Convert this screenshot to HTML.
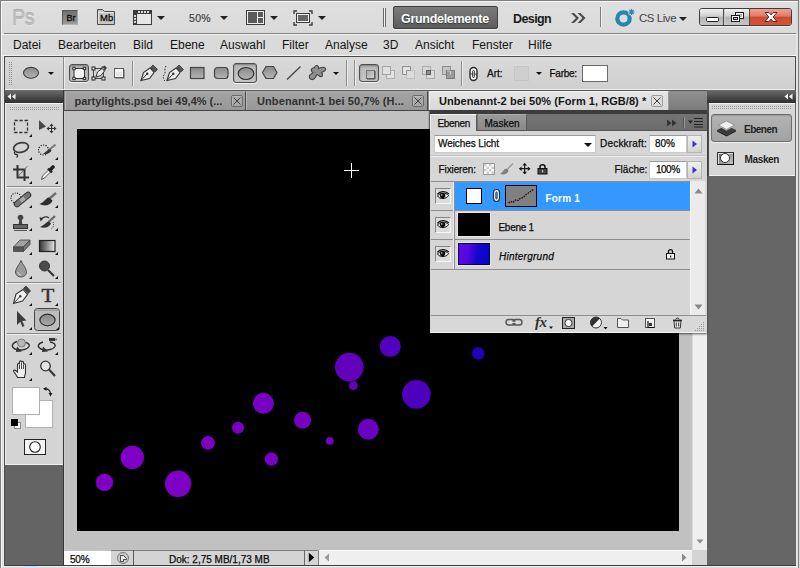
<!DOCTYPE html>
<html lang="de"><head><meta charset="utf-8"><title>Photoshop</title>
<style>
*{box-sizing:border-box;margin:0;padding:0}
html,body{width:800px;height:568px;overflow:hidden;background:#d8d8d8;font-family:"Liberation Sans",sans-serif;font-size:11px;color:#111}
.a{position:absolute}
#frame{position:absolute;left:0;top:0;width:799px;height:568px;border-left:1px solid #808080;border-top:1px solid #808080;border-right:1px solid #808080;background:#d9d9d9}
#frame:before{content:"";position:absolute;left:0;top:0;right:0;bottom:0;border-left:1px solid #f6f6f6;border-top:1px solid #f6f6f6}
#appbar{left:2px;top:2px;width:794px;height:31px;background:linear-gradient(#dfdfdf,#dadada)}
#appline{left:4px;top:33px;width:792px;height:1px;background:#828282}
#menubar{left:2px;top:34px;width:794px;height:22px;background:#dadada;border-top:1px solid #f0f0f0;border-bottom:1px solid #f2f2f2}
.mi{position:absolute;top:38px;font-size:12px;color:#141414;white-space:nowrap}
#optbar{left:4px;top:56px;width:792px;height:34px;background:linear-gradient(#dadada,#cfcfcf);border-top:1px solid #4c4c4c;border-left:1px solid #707070;border-bottom:1px solid #efefef}
.vsep{position:absolute;width:1px;background:#8c8c8c;box-shadow:1px 0 0 #ececec}
#tabbar{left:64px;top:90px;width:643px;height:21px;background:linear-gradient(#909090,#7c7c7c);border-bottom:1px solid #444;border-top:1px solid #555}
.tab{position:absolute;top:91px;height:19px;background:linear-gradient(#a4a4a4,#989898);border-left:1px solid #b4b4b4;border-top:1px solid #b0b0b0;border-right:1px solid #4c4c4c;font-weight:bold;font-size:11px;color:#303030;white-space:nowrap;padding:3px 0 0 9px}
.tab.act{background:linear-gradient(#e6e6e6,#d8d8d8);color:#161616;height:19px;border-left-color:#f0f0f0;border-top-color:#f2f2f2;border-right-color:#9a9a9a}
.cb{position:absolute;top:3px;width:12px;height:12px;border-radius:2px;border:1px solid #6a6a6a;background:rgba(255,255,255,.12);box-shadow:inset 1px 1px 0 rgba(255,255,255,.18)}
.cb svg{position:absolute;left:0;top:0}
#tbhead{left:5px;top:90px;width:58px;height:13px;background:linear-gradient(#6c6c6c,#2f2f2f)}
#toolbox{left:5px;top:103px;width:58px;height:362px;background:#d4d4d4;border-top:1px solid #f2f2f2}
#tbdark{left:5px;top:465px;width:58px;height:100px;background:#646464}
#docbg{left:64px;top:111px;width:628px;height:439px;background:#c1c1c1;border-left:1px solid #cacaca}
#canvas{left:77px;top:129px;width:602px;height:402px;background:#000;overflow:hidden}
.dot{position:absolute;border-radius:50%}
.tri{width:0;height:0;border-left:4px solid transparent;border-right:4px solid transparent;border-top:4px solid #222}

.tri.s{border-left-width:3px;border-right-width:3px;border-top-width:3px;border-top-color:#111}
.selbtn{position:absolute;background:linear-gradient(#b9b9b9,#c6c6c6);border:1px solid #4f4f4f;border-radius:3px;box-shadow:inset 0 1px 2px rgba(0,0,0,.35),0 1px 0 #f2f2f2}

.eye{position:absolute;left:435px;width:16px;height:16px;background:#dcdcdc;border:1px solid #858585;border-right-color:#f8f8f8;border-bottom-color:#f8f8f8}
.t10{font-size:10px;line-height:12px;color:#0c0c0c;-webkit-text-stroke:0.25px #0c0c0c;white-space:nowrap}
.t10.b{font-weight:bold;-webkit-text-stroke:0;color:#1e1e1e}
</style></head><body>
<div id="frame"></div>
<div id="appbar" class="a"></div>
<div id="appline" class="a"></div>
<div id="menubar" class="a"></div>
<!-- APPBAR ITEMS -->
<div class="a" id="pslogo" style="left:12px;top:5px;font-size:22px;line-height:26px;letter-spacing:-0.5px;color:#bebebe;-webkit-text-stroke:0.5px #bcbcbc;text-shadow:0 1px 0 #f0f0f0,0 -1px 0 #acacac;transform:scaleX(0.9);transform-origin:0 0">Ps</div>
<div class="a abtn" style="left:62px;top:10px;width:16px;height:15px;background:linear-gradient(#6f6f6f,#9a9a9a);border:1px solid #5a5a5a;border-bottom-color:#b5b5b5;border-right-color:#a5a5a5"><span style="position:absolute;left:3.500px;top:2px;font-size:9px;line-height:11px;color:#0a0a0a;-webkit-text-stroke:0.3px #0a0a0a">Br</span></div>
<svg class="a" style="left:96px;top:8px" width="20" height="18" viewBox="0 0 20 18"><path d="M1.500 16.500V1.500H6.500L8.500 3.500H18.500V16.500Z" fill="#c6c6c6" stroke="#4a4a4a"/><path d="M2.500 15.500V4.500H17.500" fill="none" stroke="#e6e6e6"/></svg>
<div class="a" style="left:100px;top:12px;font-size:9.500px;line-height:11px;color:#0a0a0a;-webkit-text-stroke:0.3px #0a0a0a">Mb</div>
<svg class="a" style="left:133px;top:10px" width="19" height="15" viewBox="0 0 19 15"><rect x="0" y="0" width="19" height="15" fill="#3c3c3c"/><rect x="4" y="4" width="14" height="10" fill="#e6e6e6"/><g fill="#d8d8d8"><rect x="5" y="1" width="2" height="2"/><rect x="8" y="1" width="2" height="2"/><rect x="11" y="1" width="2" height="2"/><rect x="14" y="1" width="2" height="2"/><rect x="1" y="5" width="2" height="2"/><rect x="1" y="8" width="2" height="2"/><rect x="1" y="11" width="2" height="2"/></g></svg>
<div class="a tri" style="left:157px;top:16px"></div>
<div class="a" style="left:189px;top:11.500px;font-size:10.500px;line-height:13px;letter-spacing:0.3px;color:#444;-webkit-text-stroke:0.2px #444">50%</div>
<div class="a tri" style="left:220px;top:16px"></div>
<svg class="a" style="left:246px;top:10px" width="19" height="15" viewBox="0 0 19 15"><rect x="0.500" y="0.500" width="18" height="14" fill="#efefef" stroke="#3c3c3c"/><rect x="2" y="2" width="9" height="11" fill="#5a5a5a"/><rect x="12" y="2" width="5" height="5" fill="#5a5a5a"/><rect x="12" y="8" width="5" height="5" fill="#5a5a5a"/></svg>
<div class="a tri" style="left:270px;top:16px"></div>
<svg class="a" style="left:293px;top:10px" width="20" height="16" viewBox="0 0 20 16"><path d="M1 4V1H4M16 1H19V4M19 12V15H16M4 15H1V12" fill="none" stroke="#3c3c3c" stroke-width="1.400"/><rect x="3.500" y="3.500" width="13" height="9" fill="#f0f0f0" stroke="#3c3c3c"/><rect x="5" y="5" width="10" height="6" fill="#666"/></svg>
<div class="a tri" style="left:318px;top:16px"></div>
<div class="a" style="left:383px;top:8px;width:1px;height:19px;background:#6a6a6a;box-shadow:2px 0 0 #6a6a6a,1px 0 0 #f4f4f4"></div>
<div class="a" style="left:393px;top:6px;width:105px;height:23px;background:linear-gradient(#7c7c7c,#5c5c5c);border:1px solid #3f3f3f;border-radius:2px;box-shadow:0 1px 0 #f0f0f0"><span style="position:absolute;left:7px;top:4.500px;font-size:12.500px;letter-spacing:-0.3px;font-weight:bold;color:#fff;text-shadow:0 1px 1px #333;white-space:nowrap">Grundelemente</span></div>
<div class="a" style="left:513px;top:11.500px;font-size:12.500px;letter-spacing:-0.6px;font-weight:bold;color:#1a1a1a">Design</div>
<svg class="a" style="left:570px;top:12px" width="16" height="12" viewBox="0 0 16 12"><path d="M1 1H4L9 6L4 11H1L6 6Z M7.500 1H10.500L15.500 6L10.500 11H7.500L12.500 6Z" fill="#4a4a4a"/></svg>
<div class="a" style="left:600px;top:7px;width:1px;height:20px;background:#7d7d7d;box-shadow:1px 0 0 #f0f0f0"></div>
<svg class="a" style="left:613px;top:8px" width="24" height="20" viewBox="0 0 24 20"><circle cx="10.500" cy="10.500" r="6.200" fill="none" stroke="#2187ac" stroke-width="4.200"/><circle cx="18.500" cy="4" r="3.400" fill="#d9d9d9"/><path d="M18.500 1V7M15.500 4H21.500M16.400 1.900L20.600 6.100M20.600 1.900L16.400 6.100" stroke="#2187ac" stroke-width="1.100"/></svg>
<div class="a" style="left:639px;top:11px;font-size:11.500px;line-height:14px;letter-spacing:-0.45px;color:#444;white-space:nowrap">CS Live</div>
<div class="a tri" style="left:679px;top:17px"></div>
<!-- window buttons -->
<div class="a" style="left:699px;top:8px;width:93px;height:18px;border:1px solid #3c3c3c;border-radius:3px;overflow:hidden;box-shadow:0 1px 0 #f2f2f2;background:#ccc">
 <div style="position:absolute;left:0;top:0;width:24px;height:16px;background:linear-gradient(#f2f2f2,#d0d0d0 45%,#b4b4b4 50%,#c6c6c6);border-right:1px solid #4a4a4a"></div>
 <div style="position:absolute;left:25px;top:0;width:25px;height:16px;background:linear-gradient(#f2f2f2,#d0d0d0 45%,#b4b4b4 50%,#c6c6c6);border-right:1px solid #4a4a4a"></div>
 <div style="position:absolute;left:50px;top:0;width:42px;height:16px;background:linear-gradient(#eda293,#e07a66 45%,#cf4a2f 50%,#d4553a)"></div>
 <svg style="position:absolute;left:0;top:0" width="92" height="16" viewBox="0 0 92 16"><rect x="6.500" y="8.500" width="12" height="4" rx="1" fill="#fff" stroke="#1c1c1c"/><rect x="35.500" y="3.500" width="8" height="6" fill="#fff" stroke="#1c1c1c"/><rect x="37" y="5" width="5" height="3" fill="#bbb"/><rect x="31.500" y="6.500" width="8" height="6" fill="#fff" stroke="#1c1c1c"/><rect x="33.500" y="8.500" width="4" height="2" fill="#ccc" stroke="#1c1c1c"/><path d="M65 3.500H69L71 6L73 3.500H77L73.200 8L77 12.500H73L71 10L69 12.500H65L68.800 8Z" fill="#fff" stroke="#5a2a22" stroke-width="1"/></svg>
</div>
<!-- MENU -->
<div class="mi" style="left:13px">Datei</div><div class="mi" style="left:58px">Bearbeiten</div><div class="mi" style="left:133px">Bild</div><div class="mi" style="left:170px">Ebene</div><div class="mi" style="left:220px">Auswahl</div><div class="mi" style="left:282px">Filter</div><div class="mi" style="left:325px">Analyse</div><div class="mi" style="left:383px">3D</div><div class="mi" style="left:415px">Ansicht</div><div class="mi" style="left:472px">Fenster</div><div class="mi" style="left:528px">Hilfe</div>
<div id="optbar" class="a"></div>

<!-- options bar items -->
<svg class="a" style="left:8px;top:60px" width="6" height="28" viewBox="0 0 6 28"><g fill="#8e8e8e"><rect x="1" y="2" width="1" height="1"/><rect x="3" y="2" width="1" height="1"/><rect x="1" y="4" width="1" height="1"/><rect x="3" y="4" width="1" height="1"/><rect x="1" y="6" width="1" height="1"/><rect x="3" y="6" width="1" height="1"/><rect x="1" y="8" width="1" height="1"/><rect x="3" y="8" width="1" height="1"/><rect x="1" y="10" width="1" height="1"/><rect x="3" y="10" width="1" height="1"/><rect x="1" y="12" width="1" height="1"/><rect x="3" y="12" width="1" height="1"/><rect x="1" y="14" width="1" height="1"/><rect x="3" y="14" width="1" height="1"/><rect x="1" y="16" width="1" height="1"/><rect x="3" y="16" width="1" height="1"/><rect x="1" y="18" width="1" height="1"/><rect x="3" y="18" width="1" height="1"/><rect x="1" y="20" width="1" height="1"/><rect x="3" y="20" width="1" height="1"/><rect x="1" y="22" width="1" height="1"/><rect x="3" y="22" width="1" height="1"/><rect x="1" y="24" width="1" height="1"/><rect x="3" y="24" width="1" height="1"/></g></svg>
<svg class="a" style="left:22px;top:65px" width="19" height="16" viewBox="0 0 19 16"><defs><linearGradient id="eg" x1="0" y1="0" x2="0" y2="1"><stop offset="0" stop-color="#8a8a8a"/><stop offset="1" stop-color="#b4b4b4"/></linearGradient></defs><ellipse cx="9" cy="7.800" rx="7.500" ry="5.400" fill="url(#eg)" stroke="#3c3c3c" stroke-width="1.100"/></svg>
<div class="a tri s" style="left:48px;top:72px"></div>
<div class="vsep" style="left:63px;top:57px;height:32px"></div>
<div class="a selbtn" style="left:69px;top:64px;width:20px;height:18px"></div>
<svg class="a" style="left:71px;top:65px" width="16" height="16" viewBox="0 0 16 16"><rect x="3" y="3.500" width="10.500" height="10" fill="#f4f4f4" stroke="#333"/><g fill="#f4f4f4" stroke="#222" stroke-width="0.900"><rect x="1.800" y="2.300" width="2.400" height="2.400"/><rect x="12.300" y="2.300" width="2.400" height="2.400"/><rect x="1.800" y="12.300" width="2.400" height="2.400"/><rect x="12.300" y="12.300" width="2.400" height="2.400"/></g></svg>
<svg class="a" style="left:91px;top:64px" width="17" height="18" viewBox="0 0 17 18"><rect x="2.500" y="4.500" width="10" height="10" fill="none" stroke="#444"/><g fill="#eee" stroke="#222"><rect x="1" y="3" width="3" height="3"/><rect x="11" y="3" width="3" height="3"/><rect x="1" y="13" width="3" height="3"/><rect x="11" y="13" width="3" height="3"/></g><path d="M5 13L6.500 8L11 4.500L13.500 7L10 11.500Z" fill="#e8e8e8" stroke="#333"/><path d="M11.500 3.500L13.500 1.500L16 4L14 6Z" fill="#444"/></svg>
<svg class="a" style="left:113px;top:67px" width="13" height="13" viewBox="0 0 13 13"><rect x="1.500" y="1.500" width="9" height="9" fill="#f4f4f4" stroke="#5a5a5a"/><path d="M2.500 11.500H11.500V2.500" fill="none" stroke="#9a9a9a"/><rect x="3" y="5" width="6" height="4" fill="#e6e6e6"/></svg>
<div class="vsep" style="left:132px;top:61px;height:25px"></div>
<svg class="a" style="left:139px;top:64px" width="20" height="18" viewBox="0 0 20 18"><path d="M2 16.500L4.500 8.500L11 4L15 8.500L10.500 14.500Z" fill="#eee" stroke="#333" stroke-width="1.100"/><path d="M2 16.500L8 10" stroke="#333"/><circle cx="8.300" cy="9.700" r="1.200" fill="#333"/><path d="M11.500 3.500L14 1L18.500 5.500L16 8Z" fill="#555" stroke="#333" stroke-width="0.800"/></svg>
<svg class="a" style="left:162px;top:64px" width="23" height="18" viewBox="0 0 23 18"><path d="M4 2C1.500 5 4.500 8 2 11S3 15 2.500 17" fill="none" stroke="#333" stroke-dasharray="1.500 1.500"/><path d="M5 16.500L7.500 8.500L14 4L18 8.500L13.500 14.500Z" fill="#eee" stroke="#333" stroke-width="1.100"/><path d="M5 16.500L11 10" stroke="#333"/><circle cx="11.300" cy="9.700" r="1.200" fill="#333"/><path d="M14.500 3.500L17 1L21.500 5.500L19 8Z" fill="#555" stroke="#333" stroke-width="0.800"/></svg>
<svg class="a" style="left:189px;top:66px" width="17" height="14" viewBox="0 0 17 14"><rect x="1.500" y="1.500" width="13.500" height="11" fill="url(#eg)" stroke="#444" stroke-width="1.200"/></svg>
<svg class="a" style="left:213px;top:66px" width="17" height="14" viewBox="0 0 17 14"><rect x="1.500" y="1.500" width="13.500" height="11" rx="3" fill="url(#eg)" stroke="#444" stroke-width="1.200"/></svg>
<div class="a selbtn" style="left:233px;top:63px;width:24px;height:20px"></div>
<svg class="a" style="left:237px;top:66px" width="19" height="15" viewBox="0 0 19 15"><ellipse cx="9" cy="7.500" rx="7.800" ry="6" fill="url(#eg)" stroke="#333" stroke-width="1.200"/></svg>
<svg class="a" style="left:261px;top:65px" width="18" height="15" viewBox="0 0 18 15"><path d="M1.500 7.500L5 1.500H12.500L16 7.500L12.500 13.500H5Z" fill="url(#eg)" stroke="#444" stroke-width="1.200"/></svg>
<svg class="a" style="left:286px;top:65px" width="16" height="16" viewBox="0 0 16 16"><path d="M1 14.500L14.500 1.500" stroke="#444" stroke-width="1.300"/></svg>
<svg class="a" style="left:307px;top:64px" width="21" height="18" viewBox="0 0 21 18"><path d="M8 2.500C9.500 0.500 12 2 11.500 4.500C13.500 3.500 17 2.500 18.500 4.500C19.500 6.500 16.500 7.500 14.500 8.500C16.500 10.500 15.500 13 13 12.500C12 12 11 10.500 10 10.500C9 11.500 8.500 15 6 15.500C3.500 16 1.500 14 2.500 11.500C3.500 10 6 9.500 6 8.500C4.500 8 3.500 6 5 4.500C6 3.500 7.500 4.500 8 2.500Z" fill="#8f8f8f" stroke="#444" stroke-width="1.100"/></svg>
<div class="a tri s" style="left:333px;top:72px"></div>
<div class="vsep" style="left:346px;top:60px;height:26px"></div>
<div class="vsep" style="left:354px;top:60px;height:26px"></div>
<div class="a selbtn" style="left:359px;top:64px;width:20px;height:18px"></div>
<svg class="a" style="left:363px;top:67px" width="14" height="13" viewBox="0 0 14 13"><defs><linearGradient id="sq" x1="0" y1="0" x2="1" y2="1"><stop offset="0" stop-color="#a4a4a4"/><stop offset="1" stop-color="#d4d4d4"/></linearGradient></defs><rect x="3.500" y="3.500" width="8" height="8" fill="url(#sq)" stroke="#777"/><path d="M4 12H12V4" fill="none" stroke="#4a4a4a"/></svg>
<svg class="a" style="left:382px;top:66px" width="14" height="14" viewBox="0 0 14 14"><rect x="4.500" y="4.500" width="8" height="8" fill="#e2e2e2" stroke="#b0b0b0"/><rect x="0.500" y="0.500" width="8" height="8" fill="#e0e0e0" stroke="#a4a4a4"/></svg>
<svg class="a" style="left:402px;top:66px" width="14" height="14" viewBox="0 0 14 14"><rect x="4.500" y="4.500" width="8" height="8" fill="#dcdcdc" stroke="#c0c0c0"/><path d="M0.500 8.500V0.500H8.500V4.500H4.500V8.500Z" fill="#e4e4e4" stroke="#8e8e8e"/></svg>
<svg class="a" style="left:422px;top:66px" width="14" height="14" viewBox="0 0 14 14"><rect x="4.500" y="4.500" width="8" height="8" fill="#dcdcdc" stroke="#aaa"/><rect x="0.500" y="0.500" width="8" height="8" fill="none" stroke="#aaa"/><rect x="4.500" y="4.500" width="4" height="4" fill="#8e8e8e" stroke="#5e5e5e"/></svg>
<svg class="a" style="left:442px;top:66px" width="14" height="14" viewBox="0 0 14 14"><rect x="0.500" y="0.500" width="8" height="8" fill="#c4c4c4" stroke="#8e8e8e"/><rect x="4.500" y="4.500" width="8" height="8" fill="#9a9a9a" stroke="#7a7a7a"/><path d="M5 5H8.500V8.500" fill="none" stroke="#ddd" stroke-width="0.800"/></svg>
<div class="vsep" style="left:461px;top:61px;height:25px"></div>
<svg class="a" style="left:468px;top:66px" width="12" height="16" viewBox="0 0 12 16"><rect x="2" y="1.500" width="7" height="13" rx="3.500" fill="#f6f6f6" stroke="#2a2a2a" stroke-width="1.400"/><rect x="4.600" y="4.500" width="1.800" height="7" rx="0.900" fill="#d8d8d8" stroke="#2a2a2a" stroke-width="0.900"/><path d="M2 8H4.500M6.500 8H9" stroke="#2a2a2a" stroke-width="0.800"/></svg>
<div class="a t10" style="left:487px;top:68px">Art:</div>
<div class="a" style="left:514px;top:66px;width:15px;height:15px;background:#cfcfcf;border:1px solid #c6c6c6"></div>
<div class="a tri s" style="left:536px;top:72px"></div>
<div class="a t10" style="left:549.500px;top:68px;letter-spacing:-0.25px">Farbe:</div>
<div class="a" style="left:582px;top:65px;width:26px;height:17px;background:#fff;border:1px solid #6a6a6a"></div>

<div id="tbhead" class="a"></div>
<div id="toolbox" class="a"></div>
<div id="tbdark" class="a"></div><div class="a" style="left:63px;top:90px;width:1px;height:475px;background:#363636"></div>
<svg class="a" style="left:5px;top:103px" width="59" height="362" viewBox="5 103 59 362"><g fill="#9a9a9a"><rect x="10" y="107" width="1" height="1"/><rect x="10" y="109" width="1" height="1"/><rect x="12" y="107" width="1" height="1"/><rect x="12" y="109" width="1" height="1"/><rect x="14" y="107" width="1" height="1"/><rect x="14" y="109" width="1" height="1"/><rect x="16" y="107" width="1" height="1"/><rect x="16" y="109" width="1" height="1"/><rect x="18" y="107" width="1" height="1"/><rect x="18" y="109" width="1" height="1"/><rect x="20" y="107" width="1" height="1"/><rect x="20" y="109" width="1" height="1"/><rect x="22" y="107" width="1" height="1"/><rect x="22" y="109" width="1" height="1"/><rect x="24" y="107" width="1" height="1"/><rect x="24" y="109" width="1" height="1"/><rect x="26" y="107" width="1" height="1"/><rect x="26" y="109" width="1" height="1"/><rect x="28" y="107" width="1" height="1"/><rect x="28" y="109" width="1" height="1"/><rect x="30" y="107" width="1" height="1"/><rect x="30" y="109" width="1" height="1"/><rect x="32" y="107" width="1" height="1"/><rect x="32" y="109" width="1" height="1"/><rect x="34" y="107" width="1" height="1"/><rect x="34" y="109" width="1" height="1"/><rect x="36" y="107" width="1" height="1"/><rect x="36" y="109" width="1" height="1"/><rect x="38" y="107" width="1" height="1"/><rect x="38" y="109" width="1" height="1"/><rect x="40" y="107" width="1" height="1"/><rect x="40" y="109" width="1" height="1"/><rect x="42" y="107" width="1" height="1"/><rect x="42" y="109" width="1" height="1"/><rect x="44" y="107" width="1" height="1"/><rect x="44" y="109" width="1" height="1"/><rect x="46" y="107" width="1" height="1"/><rect x="46" y="109" width="1" height="1"/><rect x="48" y="107" width="1" height="1"/><rect x="48" y="109" width="1" height="1"/><rect x="50" y="107" width="1" height="1"/><rect x="50" y="109" width="1" height="1"/><rect x="52" y="107" width="1" height="1"/><rect x="52" y="109" width="1" height="1"/><rect x="54" y="107" width="1" height="1"/><rect x="54" y="109" width="1" height="1"/><rect x="56" y="107" width="1" height="1"/><rect x="56" y="109" width="1" height="1"/><rect x="58" y="107" width="1" height="1"/><rect x="58" y="109" width="1" height="1"/></g><rect x="7" y="186" width="54" height="1" fill="#8a8a8a"/><rect x="7" y="187" width="54" height="1" fill="#efefef"/><rect x="7" y="282" width="54" height="1" fill="#8a8a8a"/><rect x="7" y="283" width="54" height="1" fill="#efefef"/><rect x="7" y="333" width="54" height="1" fill="#8a8a8a"/><rect x="7" y="334" width="54" height="1" fill="#efefef"/>
<defs><linearGradient id="tg" x1="0" y1="0" x2="1" y2="0"><stop offset="0" stop-color="#333"/><stop offset="1" stop-color="#e8e8e8"/></linearGradient>
<linearGradient id="tg2" x1="0" y1="0" x2="0" y2="1"><stop offset="0" stop-color="#8a8a8a"/><stop offset="1" stop-color="#a8a8a8"/></linearGradient></defs>
<!-- marquee -->
<rect x="14.500" y="120.500" width="13" height="12" fill="none" stroke="#333" stroke-width="1.300" stroke-dasharray="3.200 1.800"/>
<!-- move -->
<path d="M39 120L46 126.500L39 130Z" fill="#4a4a4a"/><path d="M51.500 125V132M48 128.500H55" stroke="#333" stroke-width="1.100"/><path d="M51.500 123.500L53.500 126H49.500ZM51.500 133.500L53.500 131H49.500ZM46.500 128.500L49 126.500V130.500ZM56.500 128.500L54 126.500V130.500Z" fill="#333"/>
<!-- lasso -->
<ellipse cx="21" cy="147.500" rx="7.500" ry="4.800" fill="none" stroke="#3a3a3a" stroke-width="1.700" transform="rotate(-12 21 147.500)"/><path d="M15 151.500C13.500 153 15 154.500 16.500 154.500S18 156.500 16.500 157.500" fill="none" stroke="#3a3a3a" stroke-width="1.300"/>
<!-- quick select -->
<circle cx="43.500" cy="150" r="5" fill="none" stroke="#222" stroke-width="1.200" stroke-dasharray="1.200 1.300"/><path d="M55.500 144.500L49 150" stroke="#777" stroke-width="2"/><path d="M50 149C47 150 45 153 43 153.500C46 155 50 153.500 51.500 150.500Z" fill="#333"/>
<!-- crop -->
<path d="M17.500 165V177.500H29M13 169.500H24.500V181" fill="none" stroke="#333" stroke-width="2"/><path d="M27.500 166L17.500 177" stroke="#555" stroke-width="0.800"/>
<!-- eyedropper -->
<path d="M41.500 179.500L42.500 176L49 169.500L51 171.500L44.500 178Z" fill="#f4f4f4" stroke="#444" stroke-width="0.900"/><path d="M48 168.500L52 172.500" stroke="#222" stroke-width="2.400"/><path d="M50.500 169.500L53 167" stroke="#222" stroke-width="3.600" stroke-linecap="round"/>
<!-- healing -->
<circle cx="16" cy="198" r="5" fill="none" stroke="#222" stroke-width="1.100" stroke-dasharray="1.100 1.300"/><path d="M17 204L28 195" stroke="#333" stroke-width="6.500" stroke-linecap="round"/><path d="M17 204L28 195" stroke="#777" stroke-width="4.500" stroke-linecap="round"/><path d="M20.500 201L24.500 198" stroke="#aaa" stroke-width="3.600"/>
<!-- brush -->
<path d="M56 193L49 199" stroke="#707070" stroke-width="2.400"/><path d="M49 197.500C45.500 198 44 202.500 39.500 204C43.500 206.500 50.500 206 52.500 200.500Z" fill="#2e2e2e"/>
<!-- stamp -->
<circle cx="20.500" cy="217.500" r="2.800" fill="#444"/><path d="M19.300 219H21.700L22.300 225H18.700Z" fill="#444"/><rect x="13.500" y="224.500" width="14" height="4" fill="#666" stroke="#333"/><rect x="14" y="230" width="13" height="1" fill="#555"/>
<!-- history brush -->
<path d="M55 216L48.500 222" stroke="#666" stroke-width="2.200"/><path d="M49 221.500C46 222 44 225.500 40 227C44 228.500 49.500 227.500 51 223.500Z" fill="#333"/><path d="M41 219.500C43 216.500 47 216 49 218" fill="none" stroke="#333" stroke-width="1.200"/><path d="M39.500 217L43.500 218.500L40.500 221.500Z" fill="#333"/><path d="M53 222C54.500 225 53 228.500 50.500 229.500" fill="none" stroke="#444" stroke-dasharray="1 1.200"/>
<!-- eraser -->
<path d="M13.500 247L20 240H30L23.500 247Z" fill="#a0a0a0" stroke="#444" stroke-width="0.800"/><path d="M13.500 247H23.500V251.500H13.500Z" fill="#555" stroke="#444" stroke-width="0.800"/><path d="M23.500 247L30 240V244.500L23.500 251.500Z" fill="#777" stroke="#444" stroke-width="0.800"/>
<!-- gradient -->
<rect x="39.500" y="240.500" width="15.500" height="11" fill="url(#tg)" stroke="#222" stroke-width="1.200"/>
<!-- blur drop -->
<path d="M21 260.500C22 264 26.500 268 26.500 272C26.500 275 24 277 21 277S15.500 275 15.500 272C15.500 268 20 264 21 260.500Z" fill="#9a9a9a" stroke="#555" stroke-width="1"/><path d="M18 272C18 274 19.500 275 21 275" fill="none" stroke="#ddd" stroke-width="1"/>
<!-- dodge -->
<circle cx="44.500" cy="266" r="5" fill="#4a4a4a" stroke="#333"/><path d="M48 270L54 276" stroke="#333" stroke-width="2"/>
<!-- pen -->
<path d="M13.500 303.500L16 294L23 289.500L27.500 294.500L22.500 301Z" fill="#f0f0f0" stroke="#333" stroke-width="1.100"/><path d="M13.500 303.500L20 296.500" stroke="#333"/><circle cx="20.300" cy="296.200" r="1.200" fill="#333"/><path d="M23.500 288.500L26 286L30.500 291L28 293.500Z" fill="#444" stroke="#333" stroke-width="0.800"/>
<!-- path select -->
<path d="M17 311V325L20.300 321.800L22.500 327L24.500 326L22.300 321L26.500 320.500Z" fill="#3c3c3c"/>
<!-- ellipse tool selected -->
<rect x="34.500" y="308.500" width="25" height="22" rx="3" fill="#bdbdbd" stroke="#444"/><rect x="35.500" y="309.500" width="23" height="1.500" fill="#a0a0a0"/>
<ellipse cx="47.500" cy="320" rx="7.600" ry="5.800" fill="url(#tg2)" stroke="#333" stroke-width="1.200"/>
<!-- 3d rotate -->
<circle cx="21.500" cy="343" r="4" fill="#b8b8b8" stroke="#666" stroke-width="0.800"/><path d="M17 341.500C12 343 10.500 347 15 349S27 350 29 346.500C30 344.500 28 343 26 342.500" fill="none" stroke="#333" stroke-width="1.400"/><path d="M17 346.500L22 351.500L16 352Z" fill="#333"/>
<!-- 3d orbit -->
<path d="M43 342C38 343.500 36.500 347 41 349S53 350 55 346.500C56 344.500 54 342.500 50 342" fill="none" stroke="#333" stroke-width="1.400"/><path d="M43 346.500L48 351.500L42 352Z" fill="#333"/><rect x="49" y="338" width="6" height="3" fill="#333"/><rect x="55" y="338.500" width="2" height="2" fill="#777"/>
<!-- hand -->
<path d="M17.500 377.500C16 374 13 371.500 13.500 370.500C14.500 369.500 16 370.500 17.500 372V364.500C17.500 363 19.500 363 19.500 364.500V362C19.500 360.500 21.500 360.500 21.500 362V362.500C21.500 361 23.500 361 23.500 362.500V364.500C23.500 363.500 25.500 363.500 25.500 365V372C25.500 374.500 24.500 376 24.500 377.500Z" fill="#f0f0f0" stroke="#333" stroke-width="1.100"/><path d="M19.500 365V369M21.500 363V369M23.500 365V369" stroke="#333" stroke-width="0.900"/>
<!-- zoom -->
<circle cx="45.500" cy="366" r="4.800" fill="#e4e4e4" stroke="#333" stroke-width="1.300"/><path d="M49 369.500L55 376" stroke="#333" stroke-width="2"/>
<path d="M29 137H32V134Z" fill="#111"/><path d="M29 160H32V157Z" fill="#111"/><path d="M55 160H58V157Z" fill="#111"/><path d="M29 184H32V181Z" fill="#111"/><path d="M55 184H58V181Z" fill="#111"/><path d="M29 208H32V205Z" fill="#111"/><path d="M55 208H58V205Z" fill="#111"/><path d="M29 231H32V228Z" fill="#111"/><path d="M55 231H58V228Z" fill="#111"/><path d="M29 255H32V252Z" fill="#111"/><path d="M55 255H58V252Z" fill="#111"/><path d="M29 279H32V276Z" fill="#111"/><path d="M55 279H58V276Z" fill="#111"/><path d="M29 306H32V303Z" fill="#111"/><path d="M55 306H58V303Z" fill="#111"/><path d="M29 330H32V327Z" fill="#111"/><path d="M56 330H59V327Z" fill="#111"/><path d="M29 355H32V352Z" fill="#111"/><path d="M55 355H58V352Z" fill="#111"/><path d="M29 381H32V378Z" fill="#111"/>
<!-- swatches -->
<rect x="25.500" y="400.500" width="27" height="27" fill="#fff" stroke="#b0b0b0"/>
<rect x="12.500" y="387.500" width="27" height="27" fill="#fff" stroke="#b0b0b0"/>
<path d="M44 389C47 388 50 390 50.500 393" fill="none" stroke="#222" stroke-width="1.300"/><path d="M43 388.500L46.500 387V391ZM50.500 396.500L48.500 393H52.500Z" fill="#222"/>
<rect x="14.500" y="422.500" width="6" height="6" fill="#fff" stroke="#888"/><rect x="11" y="419" width="7" height="7" fill="#000"/>
<rect x="24.500" y="439.500" width="21" height="15" fill="#f4f4f4" stroke="#222"/><circle cx="35" cy="447" r="5.300" fill="#fff" stroke="#222" stroke-width="1.100"/>
</svg>
<div class="a" style="left:41px;top:286px;width:14px;font-family:'Liberation Serif',serif;font-size:19px;line-height:19px;color:#333;-webkit-text-stroke:0.5px #333;text-align:center;transform:scaleX(1.1)">T</div>

<div id="tabbar" class="a"></div>

<div class="tab" style="left:65px;width:181px;padding-left:8.500px">partylights.psd bei 49,4% (...<div class="cb" style="left:165px"><svg width="10" height="10" viewBox="0 0 10 10"><path d="M1.500 1.500L8.500 8.500M8.500 1.500L1.500 8.500" stroke="#404040" stroke-width="1"/></svg></div></div>
<div class="tab" style="left:246px;width:182px;letter-spacing:0.1px;padding-left:10px">Unbenannt-1 bei 50,7% (H...<div class="cb" style="left:165px"><svg width="10" height="10" viewBox="0 0 10 10"><path d="M1.500 1.500L8.500 8.500M8.500 1.500L1.500 8.500" stroke="#404040" stroke-width="1"/></svg></div></div>
<div class="tab act" style="left:429px;width:239.500px;letter-spacing:0.05px;padding-left:9px">Unbenannt-2 bei 50% (Form 1, RGB/8) *<div class="cb" style="left:221px;background:#dcdcdc;border-color:#9c9c9c"><svg width="10" height="10" viewBox="0 0 10 10"><path d="M1.500 1.500L8.500 8.500M8.500 1.500L1.500 8.500" stroke="#404040" stroke-width="1"/></svg></div></div>
<svg class="a" style="left:7px;top:93px" width="10" height="8" viewBox="0 0 10 8"><path d="M4 0.500V6.500L0.500 3.500ZM8.500 0.500V6.500L5 3.500Z" fill="#f2f2f2"/></svg>

<div id="docbg" class="a"></div>
<div id="canvas" class="a">
<svg width="602" height="402" viewBox="77 129 602 402" style="position:absolute;left:0;top:0"><circle cx="104.5" cy="482.3" r="8.7" fill="#7d00c4"/><circle cx="132.3" cy="457.4" r="11.7" fill="#7d00c4"/><circle cx="178.1" cy="483.8" r="13.2" fill="#7d00c4"/><circle cx="208" cy="442.8" r="6.9" fill="#7d00c4"/><circle cx="238" cy="427.8" r="6" fill="#7c00c4"/><circle cx="263.4" cy="403.3" r="10.5" fill="#7a00c4"/><circle cx="271.4" cy="459.2" r="6.6" fill="#7c00c4"/><circle cx="302.6" cy="420.2" r="8.5" fill="#7500c2"/><circle cx="329.8" cy="440.8" r="3.9" fill="#7400c2"/><circle cx="349.3" cy="367.1" r="14.3" fill="#6200bc"/><circle cx="353.4" cy="385.6" r="4.4" fill="#6600be"/><circle cx="368.3" cy="429.3" r="10.5" fill="#6c00c0"/><circle cx="390.3" cy="346.5" r="10.5" fill="#5200be"/><circle cx="416.4" cy="394.4" r="14.3" fill="#4e00bc"/><circle cx="478.3" cy="353.4" r="6.3" fill="#2000b8"/></svg>
</div>

<div class="a" style="left:795px;top:56px;width:1px;height:510px;background:#4c4c4c"></div><div class="a" style="left:796px;top:34px;width:2px;height:534px;background:#e4e4e4"></div>
<div class="a" style="left:344px;top:170px;width:15px;height:1px;background:#fff"></div><div class="a" style="left:351px;top:163px;width:1px;height:15px;background:#fff"></div>
<!-- vertical scrollbar (visible part under layers panel) -->
<div class="a" style="left:692px;top:111px;width:15px;height:439px;background:#efefef;border-left:1px solid #dcdcdc"></div>
<svg class="a" style="left:696px;top:539px" width="8" height="5" viewBox="0 0 8 5"><path d="M0.500 0.500H7.500L4 4.500Z" fill="#8a8a8a"/></svg>
<!-- status bar -->
<div class="a" style="left:64px;top:550px;width:255px;height:15px;background:#d4d4d4;border-top:1px solid #808080"></div>
<div class="a" style="left:64px;top:550px;width:47px;height:15px;background:#fff;border-top:1px solid #c4c4c4"></div>
<div class="a t10" style="left:70px;top:554px;letter-spacing:-0.2px">50%</div>
<div class="a" style="left:117px;top:552px;width:12px;height:12px;border-radius:50%;background:#cacaca;border:1px solid #7a7a7a"></div>
<svg class="a" style="left:119px;top:554px" width="9" height="9" viewBox="0 0 9 9"><path d="M1.500 1.500H4.500L7.500 4.500V5.500H4.500V7.500H1.500Z" fill="#e8e8e8" stroke="#3a3a3a" stroke-width="0.900"/></svg>
<div class="a" style="left:133px;top:550px;width:1px;height:15px;background:#5a5a5a"></div>
<div class="a t10" style="left:169px;top:554px;white-space:nowrap">Dok: 2,75 MB/1,73 MB</div>
<div class="a" style="left:304px;top:550px;width:1px;height:15px;background:#6a6a6a"></div>
<svg class="a" style="left:308px;top:552px" width="7" height="11" viewBox="0 0 7 11"><path d="M0.800 0.800V10.200L6.200 5.500Z" fill="#000"/></svg>
<div class="a" style="left:318px;top:550px;width:374px;height:15px;background:#efefef;border-top:1px solid #fafafa;border-left:1px solid #7a7a7a"></div>
<svg class="a" style="left:324px;top:553px" width="6" height="9" viewBox="0 0 6 9"><path d="M5 0.500V8.500L0.500 4.500Z" fill="#9a9a9a"/></svg>
<svg class="a" style="left:681px;top:553px" width="6" height="9" viewBox="0 0 6 9"><path d="M1 0.500V8.500L5.500 4.500Z" fill="#8a8a8a"/></svg>
<div class="a" style="left:692px;top:550px;width:15px;height:15px;background:#d4d4d4"></div>
<div class="a" style="left:4px;top:565px;width:792px;height:1px;background:#3c3c3c"></div><div class="a" style="left:2px;top:566px;width:796px;height:1px;background:#f0f0f0"></div><div class="a" style="left:4px;top:56px;width:1px;height:510px;background:#4a4a4a"></div><div class="a" style="left:3px;top:56px;width:1px;height:511px;background:#ececec"></div><div class="a" style="left:5px;top:104px;width:1px;height:360px;background:#ececec"></div><div class="a" style="left:5px;top:464px;width:58px;height:1px;background:#f0f0f0"></div>
<div class="a" style="left:23px;top:566px;width:16px;height:2px;background:#cfe2f6;border-radius:3px 3px 0 0"></div>


<div class="a" style="left:707px;top:90px;width:89px;height:475px;background:#666"></div>
<div class="a" style="left:707px;top:90px;width:89px;height:13px;background:linear-gradient(#6c6c6c,#2f2f2f)"></div>
<svg class="a" style="left:784px;top:93px" width="10" height="8" viewBox="0 0 10 8"><path d="M4 0.500V6.500L0.500 3.500ZM8.500 0.500V6.500L5 3.500Z" fill="#f2f2f2"/></svg>
<div class="a" style="left:709px;top:103px;width:86px;height:73px;background:#d6d6d6;border-top:1px solid #f0f0f0;border-bottom:1px solid #f0f0f0"></div>
<div class="a" style="left:707px;top:103px;width:2px;height:73px;background:#505050"></div>
<svg class="a" style="left:712px;top:106px" width="80" height="4" viewBox="0 0 80 4"><g fill="#9a9a9a"><rect x="0" y="0" width="1" height="1"/><rect x="0" y="2" width="1" height="1"/><rect x="2" y="0" width="1" height="1"/><rect x="2" y="2" width="1" height="1"/><rect x="4" y="0" width="1" height="1"/><rect x="4" y="2" width="1" height="1"/><rect x="6" y="0" width="1" height="1"/><rect x="6" y="2" width="1" height="1"/><rect x="8" y="0" width="1" height="1"/><rect x="8" y="2" width="1" height="1"/><rect x="10" y="0" width="1" height="1"/><rect x="10" y="2" width="1" height="1"/><rect x="12" y="0" width="1" height="1"/><rect x="12" y="2" width="1" height="1"/><rect x="14" y="0" width="1" height="1"/><rect x="14" y="2" width="1" height="1"/><rect x="16" y="0" width="1" height="1"/><rect x="16" y="2" width="1" height="1"/><rect x="18" y="0" width="1" height="1"/><rect x="18" y="2" width="1" height="1"/><rect x="20" y="0" width="1" height="1"/><rect x="20" y="2" width="1" height="1"/><rect x="22" y="0" width="1" height="1"/><rect x="22" y="2" width="1" height="1"/><rect x="24" y="0" width="1" height="1"/><rect x="24" y="2" width="1" height="1"/><rect x="26" y="0" width="1" height="1"/><rect x="26" y="2" width="1" height="1"/><rect x="28" y="0" width="1" height="1"/><rect x="28" y="2" width="1" height="1"/><rect x="30" y="0" width="1" height="1"/><rect x="30" y="2" width="1" height="1"/><rect x="32" y="0" width="1" height="1"/><rect x="32" y="2" width="1" height="1"/><rect x="34" y="0" width="1" height="1"/><rect x="34" y="2" width="1" height="1"/><rect x="36" y="0" width="1" height="1"/><rect x="36" y="2" width="1" height="1"/><rect x="38" y="0" width="1" height="1"/><rect x="38" y="2" width="1" height="1"/><rect x="40" y="0" width="1" height="1"/><rect x="40" y="2" width="1" height="1"/><rect x="42" y="0" width="1" height="1"/><rect x="42" y="2" width="1" height="1"/><rect x="44" y="0" width="1" height="1"/><rect x="44" y="2" width="1" height="1"/><rect x="46" y="0" width="1" height="1"/><rect x="46" y="2" width="1" height="1"/><rect x="48" y="0" width="1" height="1"/><rect x="48" y="2" width="1" height="1"/><rect x="50" y="0" width="1" height="1"/><rect x="50" y="2" width="1" height="1"/><rect x="52" y="0" width="1" height="1"/><rect x="52" y="2" width="1" height="1"/><rect x="54" y="0" width="1" height="1"/><rect x="54" y="2" width="1" height="1"/><rect x="56" y="0" width="1" height="1"/><rect x="56" y="2" width="1" height="1"/><rect x="58" y="0" width="1" height="1"/><rect x="58" y="2" width="1" height="1"/><rect x="60" y="0" width="1" height="1"/><rect x="60" y="2" width="1" height="1"/><rect x="62" y="0" width="1" height="1"/><rect x="62" y="2" width="1" height="1"/><rect x="64" y="0" width="1" height="1"/><rect x="64" y="2" width="1" height="1"/><rect x="66" y="0" width="1" height="1"/><rect x="66" y="2" width="1" height="1"/><rect x="68" y="0" width="1" height="1"/><rect x="68" y="2" width="1" height="1"/><rect x="70" y="0" width="1" height="1"/><rect x="70" y="2" width="1" height="1"/><rect x="72" y="0" width="1" height="1"/><rect x="72" y="2" width="1" height="1"/><rect x="74" y="0" width="1" height="1"/><rect x="74" y="2" width="1" height="1"/><rect x="76" y="0" width="1" height="1"/><rect x="76" y="2" width="1" height="1"/><rect x="78" y="0" width="1" height="1"/><rect x="78" y="2" width="1" height="1"/></g></svg>
<div class="a" style="left:711px;top:114px;width:81px;height:28px;background:linear-gradient(#b4b4b4,#a2a2a2);border:1px solid #6e6e6e;border-radius:3px;box-shadow:0 1px 0 #f0f0f0, inset 0 1px 1px rgba(0,0,0,.15)"></div>
<svg class="a" style="left:716px;top:118px" width="21" height="20" viewBox="0 0 21 20"><path d="M1 12L10.500 7.500L20 12L10.500 17Z" fill="#3a3a3a"/><path d="M1 12V13.500L10.500 18.500L20 13.500V12L10.500 17Z" fill="#222"/><path d="M2.500 7L10.500 3L18.500 7L10.500 11.500Z" fill="#f0f0f0" stroke="#8a8a8a" stroke-width="0.800"/><path d="M2.500 7V8.300L10.500 12.800L18.500 8.300V7L10.500 11.500Z" fill="#aaa"/></svg>
<div class="a t10 b" style="left:744px;top:124px;letter-spacing:-0.5px">Ebenen</div>
<div class="a" style="left:717px;top:152px;width:17px;height:13px;background:linear-gradient(135deg,#6a6a6a,#c4c4c4);border:1px solid #333;border-bottom-color:#111;border-right-color:#111;box-shadow:inset 1px 1px 0 #ddd"></div>
<div class="a" style="left:720px;top:153px;width:10px;height:10px;border-radius:50%;background:#fff;border:1px solid #333"></div>
<div class="a t10 b" style="left:744.500px;top:154px;letter-spacing:-0.35px">Masken</div>


<div id="lp" class="a" style="left:430px;top:111px;width:277px;height:222px;background:#d6d6d6;box-shadow:0 1px 2px rgba(0,0,0,.6), -1px 0 1px rgba(0,0,0,.4)"></div>
<div class="a" style="left:430px;top:111px;width:277px;height:3px;background:#3c3c3c"></div>
<div class="a" style="left:430px;top:114px;width:277px;height:17px;background:linear-gradient(#747474,#6c6c6c);border-bottom:1px solid #565656"></div>
<div class="a" style="left:430px;top:114px;width:47px;height:17px;background:#d6d6d6;border-right:1px solid #5a5a5a;border-left:1px solid #efefef;border-top:1px solid #f4f4f4"></div>
<div class="a t10" style="left:437.500px;top:118px;letter-spacing:-0.35px">Ebenen</div>
<div class="a" style="left:478px;top:114px;width:49px;height:16px;background:linear-gradient(#9a9a9a,#8a8a8a);border-right:1px solid #5a5a5a;border-top:1px solid #aaa"></div>
<div class="a t10" style="left:484.500px;top:118px">Masken</div>
<svg class="a" style="left:666px;top:117px" width="40" height="11" viewBox="0 0 40 11"><path d="M1 2.500V9.500L5.500 6ZM6 2.500V9.500L10.500 6Z" fill="#333"/><rect x="17" y="0" width="1" height="11" fill="#555"/><rect x="18" y="0" width="1" height="11" fill="#999"/><path d="M22 3.500H27L24.500 6.500Z" fill="#222"/><path d="M28 1.500H37M28 4.500H37M28 7.500H37M28 10H37" stroke="#222" stroke-width="1.200"/></svg>
<!-- blend row -->
<div class="a" style="left:434px;top:135px;width:162px;height:18px;background:#fff;border:1px solid #c8c8c8;border-top-color:#9a9a9a"></div>
<div class="a t10" style="left:438px;top:138px;letter-spacing:-0.08px">Weiches Licht</div>
<div class="a tri" style="left:584px;top:143px;border-top-color:#111"></div>
<div class="a t10" style="left:600px;top:138px;letter-spacing:0.2px">Deckkraft:</div>
<div class="a" style="left:649px;top:135px;width:38px;height:18px;background:#fff;border:1px solid #c8c8c8;border-top-color:#9a9a9a"></div>
<div class="a t10" style="left:655px;top:138px">80%</div>
<div class="a" style="left:687px;top:135px;width:15px;height:18px;background:linear-gradient(#f0f0f0,#d2d2d2);border:1px solid #b4b4b4"></div>
<svg class="a" style="left:692px;top:140px" width="6" height="8" viewBox="0 0 6 8"><path d="M0.500 0.500V7.500L5 4Z" fill="#3a3ab4"/></svg>
<div class="a" style="left:431px;top:155px;width:274px;height:1px;background:#c4c4c4;border-bottom:1px solid #ececec;box-sizing:content-box"></div>
<!-- lock row -->
<div class="a t10" style="left:438.500px;top:164px;letter-spacing:-0.1px">Fixieren:</div>
<svg class="a" style="left:482px;top:162px" width="68" height="14" viewBox="0 0 68 14"><rect x="1.500" y="1.500" width="11" height="11" fill="#fff" stroke="#9a9a9a"/><g fill="#ccc"><rect x="2" y="2" width="2.500" height="2.500"/><rect x="7" y="2" width="2.500" height="2.500"/><rect x="4.500" y="4.500" width="2.500" height="2.500"/><rect x="9.500" y="4.500" width="2.500" height="2.500"/><rect x="2" y="7" width="2.500" height="2.500"/><rect x="7" y="7" width="2.500" height="2.500"/><rect x="4.500" y="9.500" width="2.500" height="2.500"/><rect x="9.500" y="9.500" width="2.500" height="2.500"/></g>
<path d="M31 1.500L24.500 8" stroke="#9a9a9a" stroke-width="1.500"/><path d="M24.500 6.500C21.500 7 21 10.500 18 11.800C21.500 13.300 26 12.300 26.500 8.500Z" fill="#808080"/>
<path d="M42.700 2.500V11M38.500 6.700H47" stroke="#1a1a1a" stroke-width="1.200"/><path d="M42.700 0.800L45 3.600H40.400ZM42.700 12.600L45 9.800H40.400ZM36.800 6.700L39.600 4.400V9ZM48.600 6.700L45.800 4.400V9Z" fill="#1a1a1a"/>
<rect x="56" y="6.500" width="9" height="5.500" fill="#3a3a3a" stroke="#111"/><path d="M58 6.500V4.800C58 2 63 2 63 4.800V6.500" fill="none" stroke="#111" stroke-width="1.500"/><rect x="60" y="8" width="1.200" height="2.500" fill="#ddd"/><path d="M56.500 8.200H64.500M56.500 10.200H64.500" stroke="#666" stroke-width="0.500"/></svg>
<div class="a t10" style="left:614.500px;top:164px">Fläche:</div>
<div class="a" style="left:649px;top:161px;width:38px;height:18px;background:#fff;border:1px solid #c8c8c8;border-top-color:#9a9a9a"></div>
<div class="a t10" style="left:656px;top:164px;letter-spacing:-0.5px">100%</div>
<div class="a" style="left:687px;top:161px;width:15px;height:18px;background:linear-gradient(#f0f0f0,#d2d2d2);border:1px solid #b4b4b4"></div>
<svg class="a" style="left:692px;top:166px" width="6" height="8" viewBox="0 0 6 8"><path d="M0.500 0.500V7.500L5 4Z" fill="#3a3ab4"/></svg>
<!-- layer list -->
<div class="a" style="left:431px;top:181px;width:259px;height:1px;background:#8e8e8e"></div>
<div class="a" style="left:431px;top:182px;width:259px;height:29px;background:#d6d6d6;border-bottom:1px solid #8e8e8e"></div>
<div class="a" style="left:455px;top:182px;width:235px;height:28px;background:#3398ff"></div>
<div class="a" style="left:431px;top:211px;width:259px;height:29px;background:#d6d6d6;border-bottom:1px solid #8e8e8e"></div>
<div class="a" style="left:431px;top:240px;width:259px;height:30px;background:#d6d6d6;border-bottom:1px solid #8e8e8e"></div>
<div class="a" style="left:454px;top:182px;width:1px;height:87px;background:#8e8e8e"></div><div class="a" style="left:453px;top:182px;width:1px;height:87px;background:#ececec"></div>
<!-- eyes -->
<div class="eye" style="top:188px"></div><div class="eye" style="top:217px"></div><div class="eye" style="top:246px"></div>
<svg class="a" style="left:435px;top:188px" width="16" height="74" viewBox="0 0 16 74"><defs><g id="ey"><path d="M2.500 8C4.500 4.500 11.500 4.500 13.500 7.500C11.500 11.500 4.500 11.500 2.500 8Z" fill="#e8e8e8" stroke="#111" stroke-width="1"/><circle cx="7.600" cy="7.600" r="2.700" fill="#0a0a0a"/><circle cx="6.800" cy="7" r="0.700" fill="#fff"/><path d="M2.300 6.300C5 2.800 11 2.800 13.800 6" fill="none" stroke="#111" stroke-width="1.200"/></g></defs><use href="#ey"/><use href="#ey" y="29"/><use href="#ey" y="58"/></svg>
<!-- row 1 -->
<div class="a" style="left:466px;top:188px;width:16px;height:16px;background:#fff;border:1px solid #000"></div>
<svg class="a" style="left:492px;top:188px" width="10" height="15" viewBox="0 0 10 15"><rect x="1.500" y="1.500" width="6" height="12" rx="3" fill="#f4f4f4" stroke="#2a2a2a" stroke-width="1.100"/><rect x="3.700" y="4" width="1.600" height="7" rx="0.800" fill="#3398ff" stroke="#333" stroke-width="0.700"/></svg>
<div class="a" style="left:505px;top:185px;width:32px;height:22px;background:#808080;border:1px solid #000"></div>
<svg class="a" style="left:506px;top:186px" width="31" height="20" viewBox="0 0 31 20"><path d="M2.500 17L5 15.500L7 16.500L9.500 14L12 14.500L14 12.500L16 12L18.500 10L20 8.500L22.500 7L25 5L27.500 3.500" fill="none" stroke="#111" stroke-width="1.300" stroke-dasharray="1.600 1"/></svg>
<div class="a t10 b" style="left:545.500px;top:192.500px;color:#fff;letter-spacing:0.2px">Form 1</div>
<!-- row 2 -->
<div class="a" style="left:458px;top:213px;width:32px;height:23px;background:#000;box-shadow:0 0 0 1px #e6e6e6"></div>
<div class="a t10" style="left:498.500px;top:221.500px;letter-spacing:-0.3px">Ebene 1</div>
<!-- row 3 -->
<div class="a" style="left:458px;top:243px;width:32px;height:22px;background:linear-gradient(100deg,#5c0ae8 0%,#5208e2 30%,#1406ce 62%,#0606c8 100%);border:1px solid #07003c;box-shadow:0 0 0 1px #e6e6e6"></div>
<div class="a t10" style="left:499px;top:250.500px;font-style:italic;letter-spacing:0.25px">Hintergrund</div>
<svg class="a" style="left:665px;top:248px" width="11" height="12" viewBox="0 0 11 12"><rect x="1.500" y="5.500" width="8" height="5.500" fill="#f4f4f4" stroke="#111"/><path d="M3.500 5.500V3.500C3.500 1 7.500 1 7.500 3.500V5.500" fill="none" stroke="#111" stroke-width="1.300"/><rect x="5" y="7.500" width="1.200" height="2" fill="#111"/></svg>
<!-- scrollbar -->
<div class="a" style="left:690px;top:181px;width:15px;height:134px;background:#ebebeb;border-left:1px solid #f6f6f6"></div>
<svg class="a" style="left:694px;top:188px" width="9" height="6" viewBox="0 0 9 6"><path d="M0.500 5.500H8.500L4.500 0.500Z" fill="#8a8a8a"/></svg>
<svg class="a" style="left:694px;top:304px" width="9" height="6" viewBox="0 0 9 6"><path d="M0.500 0.500H8.500L4.500 5.500Z" fill="#8a8a8a"/></svg>
<!-- footer -->
<div class="a" style="left:431px;top:315px;width:275px;height:1px;background:#8e8e8e"></div>
<div class="a" style="left:431px;top:316px;width:275px;height:17px;background:#d8d8d8;border-bottom:1px solid #f2f2f2"></div>
<svg class="a" style="left:504px;top:316px" width="202" height="16" viewBox="504 316 202 16">
<rect x="506" y="319.500" width="9" height="5.500" rx="2.700" fill="none" stroke="#555" stroke-width="1.400"/><rect x="513" y="319.500" width="9" height="5.500" rx="2.700" fill="none" stroke="#555" stroke-width="1.400"/><path d="M510 322.300H518" stroke="#eee" stroke-width="1"/>
<rect x="562.500" y="317.500" width="12" height="11" fill="#aaa" stroke="#222"/><circle cx="568.500" cy="323" r="3.600" fill="#fff" stroke="#333"/>
<circle cx="596" cy="322.500" r="5.500" fill="#f4f4f4" stroke="#333"/><path d="M592.100 326.400A5.500 5.500 0 0 1 599.900 318.600Z" fill="#333"/><path d="M603.500 327H607.500L605.500 329.500Z" fill="#111"/>
<path d="M617.500 327.500V318.500H621L622.500 320H628.500V327.500Z" fill="#eee" stroke="#555"/>
<rect x="645.500" y="318.500" width="9" height="9" fill="#f4f4f4" stroke="#555"/><path d="M654.500 327.500H648V321" fill="none" stroke="#111" stroke-width="1.200"/><rect x="649" y="323" width="3" height="3" fill="#333"/>
<path d="M674 321H681L680.300 328H674.700Z" fill="#eee" stroke="#222" stroke-width="0.900"/><path d="M673 320.300H682" stroke="#222" stroke-width="1.300"/><path d="M675.700 319.300C676 317.600 679 317.600 679.300 319.300" fill="none" stroke="#222" stroke-width="0.900"/><path d="M676.300 322.500V326.500M678.700 322.500V326.500" stroke="#222" stroke-width="0.900"/>
<g fill="#999"><rect x="703" y="322" width="1" height="1"/><rect x="701" y="324" width="1" height="1"/><rect x="703" y="324" width="1" height="1"/><rect x="699" y="326" width="1" height="1"/><rect x="701" y="326" width="1" height="1"/><rect x="703" y="326" width="1" height="1"/><rect x="697" y="328" width="1" height="1"/><rect x="699" y="328" width="1" height="1"/><rect x="701" y="328" width="1" height="1"/><rect x="703" y="328" width="1" height="1"/><rect x="695" y="330" width="1" height="1"/><rect x="697" y="330" width="1" height="1"/><rect x="699" y="330" width="1" height="1"/><rect x="701" y="330" width="1" height="1"/><rect x="703" y="330" width="1" height="1"/></g>
</svg>
<div class="a" style="left:535px;top:314px;font-family:'Liberation Serif',serif;font-style:italic;font-weight:bold;font-size:15px;color:#333;letter-spacing:-0.500px">fx</div>
<svg class="a" style="left:549px;top:326px" width="5" height="4" viewBox="0 0 5 4"><path d="M0 0.500H4L2 3Z" fill="#111"/></svg>

</body></html>
